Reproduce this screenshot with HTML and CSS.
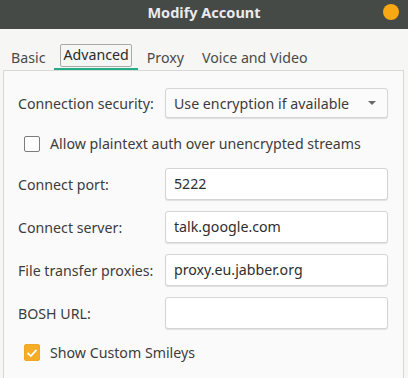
FILE: index.html
```html
<!DOCTYPE html>
<html lang="en">
<head>
  <meta charset="UTF-8" />
  <title>Modify Account</title>
  <link rel="stylesheet" href="styles.css">
</head>
<body>
  <div class="titlebar">
    <span class="title">Modify Account</span>
    <span class="close-dot"></span>
  </div>

  <div class="tabs">
    <div class="tab">Basic</div>
    <div class="tab active"><span class="focus">Advanced</span></div>
    <div class="tab">Proxy</div>
    <div class="tab">Voice and Video</div>
  </div>

  <div class="panel">
    <div class="row">
      <label>Connection security:</label>
      <div class="combo">
        <span>Use encryption if available</span>
        <span class="arrow"></span>
      </div>
    </div>

    <div class="check-row">
      <span class="check"></span>
      <span>Allow plaintext auth over unencrypted streams</span>
    </div>

    <div class="row entry-row">
      <label>Connect port:</label>
      <div class="entry">5222</div>
    </div>
    <div class="row entry-row">
      <label>Connect server:</label>
      <div class="entry">talk.google.com</div>
    </div>
    <div class="row entry-row">
      <label>File transfer proxies:</label>
      <div class="entry">proxy.eu.jabber.org</div>
    </div>
    <div class="row entry-row">
      <label>BOSH URL:</label>
      <div class="entry"></div>
    </div>

    <div class="check-row last">
      <span class="check on">
        <svg width="12" height="10" viewBox="0 0 12 10"><path d="M1.5 5 L4.8 8 L10.5 1.8" fill="none" stroke="#fff" stroke-width="1.8"/></svg>
      </span>
      <span>Show Custom Smileys</span>
    </div>
  </div>
</body>
</html>
```

FILE: styles.css
```css
body {
  margin: 0;
  background: #f6f6f5;
  font-family: "Noto Sans", "Open Sans", sans-serif;
  font-size: 14.2px;
  color: #3c3c3c;
  width: 408px;
  height: 378px;
  overflow: hidden;
}
.titlebar {
  height: 29px;
  box-sizing: border-box;
  padding-bottom: 5px;
  background: #464a47;
  display: flex;
  align-items: center;
  justify-content: center;
  position: relative;
}
.title {
  color: #ebebeb;
  font-weight: bold;
  font-size: 14.5px;
}
.close-dot {
  position: absolute;
  right: 9px;
  top: 4px;
  width: 16px;
  height: 16px;
  border-radius: 50%;
  background: #f7a812;
}
.tabs {
  display: flex;
  height: 41px;
  align-items: flex-end;
  padding-left: 2px;
}
.tab {
  padding: 0 9px 3px;
  color: #4a4a4a;
}
.tab.active {
  color: #2a2a2a;
  padding: 0 6px 1px;
  border-bottom: 2px solid #26ab87;
}
.tab.active .focus {
  display: inline-block;
  border: 1px solid #a9a9a9;
  border-radius: 2px;
  padding: 0 2px 1px;
  line-height: 20px;
}
.panel {
  margin: 0 4px 0 3px;
  border: 1px solid #d8d8d6;
  border-bottom: none;
  background: #fafafa;
  padding: 17px 15px 0 14px;
  height: 300px;
}
.row {
  display: flex;
  align-items: center;
}
.row label {
  width: 147px;
  flex: none;
}
.combo {
  width: 223px;
  height: 30px;
  box-sizing: border-box;
  border: 1px solid #d6d6d4;
  border-radius: 3px;
  background: #fbfbfb;
  box-shadow: 0 1px 1px rgba(0,0,0,0.12);
  display: flex;
  align-items: center;
  justify-content: space-between;
  padding: 0 11px 0 8px;
}
.arrow {
  width: 0;
  height: 0;
  border-left: 4px solid transparent;
  border-right: 4px solid transparent;
  border-top: 4px solid #6a6a6a;
}
.check-row {
  display: flex;
  align-items: center;
  gap: 10px;
  margin: 16px 0 15px 6px;
}
.check-row.last {
  margin-top: 14px;
}
.check {
  width: 16px;
  height: 16px;
  box-sizing: border-box;
  border: 1px solid #7c7c7c;
  border-radius: 2px;
  background: #fff;
  display: flex;
  align-items: center;
  justify-content: center;
}
.check.on {
  border-color: #f2a723;
  background: #f6ac24;
  height: 17px;
}
.entry-row + .entry-row {
  margin-top: 11px;
}
.entry {
  width: 223px;
  height: 32px;
  box-sizing: border-box;
  border: 1px solid #d4d4d2;
  border-radius: 3px;
  background: #fff;
  box-shadow: 0 1px 1px rgba(0,0,0,0.1);
  padding: 0 8px;
  line-height: 30px;
  color: #2e2e2e;
}
```
